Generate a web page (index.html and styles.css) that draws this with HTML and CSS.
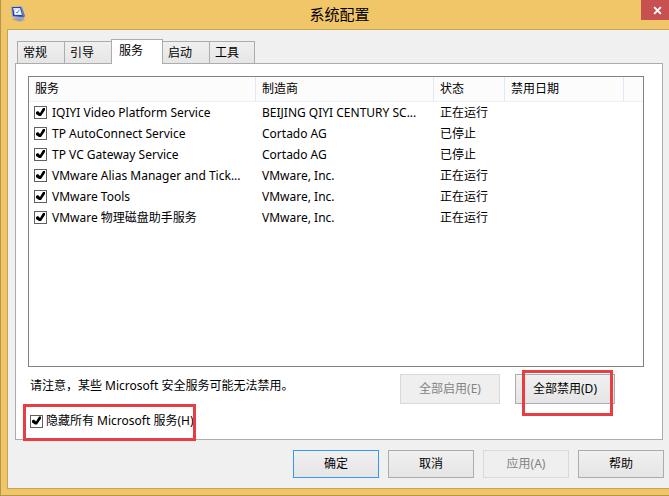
FILE: index.html
```html
<!DOCTYPE html>
<html lang="zh-CN">
<head>
<meta charset="utf-8">
<title>系统配置</title>
<link rel="stylesheet" href="styles.css">
</head>
<body>
<div class="window">
  <header class="titlebar">
    <svg class="app-icon" viewBox="0 0 16 16" aria-hidden="true">
      <path d="M2 13l5-2 6 0 2 3-5 2-7-2z" fill="#b9ac8c"/>
      <path d="M5 13l6-1 2 2-4 1z" fill="#8f9ac0"/>
      <path d="M1 1l11-1 3 11-3 2-10-2z" fill="#9aa6d2"/>
      <path d="M2 1l9 0 2 10-10-1z" fill="#2f41a0"/>
      <path d="M3 2l7 0 2 7-7 0z" fill="#cfe2fa"/>
      <path d="M4 8l3-5h2L6 9zM8 8l2-4 1 4z" fill="#fff"/>
      <path d="M6 6l1 1 2-3" fill="none" stroke="#5a82d2"/>
      <path d="M12 1l3 9-2 2z" fill="#6574b8"/>
    </svg>
    <h1>系统配置</h1>
    <button class="close" type="button" aria-label="关闭">
      <svg viewBox="0 0 8 8" aria-hidden="true"><path d="M1 1l6 6M7 1L1 7" stroke="#fff" stroke-width="1.7"/></svg>
    </button>
  </header>
  <main class="content">
    <div class="tabs" role="tablist">
      <button type="button" role="tab">常规</button>
      <button type="button" role="tab">引导</button>
      <button type="button" role="tab" class="active" aria-selected="true">服务</button>
      <button type="button" role="tab">启动</button>
      <button type="button" role="tab">工具</button>
    </div>
    <section class="panel">
      <div class="list">
        <table>
          <colgroup><col class="c-name"><col class="c-maker"><col class="c-state"><col class="c-date"><col></colgroup>
          <thead>
            <tr><th>服务</th><th>制造商</th><th>状态</th><th>禁用日期</th><th></th></tr>
          </thead>
          <tbody>
            <tr><td><label><input type="checkbox" checked>IQIYI Video Platform Service</label></td><td>BEIJING QIYI CENTURY SC...</td><td>正在运行</td><td></td><td></td></tr>
            <tr><td><label><input type="checkbox" checked>TP AutoConnect Service</label></td><td>Cortado AG</td><td>已停止</td><td></td><td></td></tr>
            <tr><td><label><input type="checkbox" checked>TP VC Gateway Service</label></td><td>Cortado AG</td><td>已停止</td><td></td><td></td></tr>
            <tr><td><label><input type="checkbox" checked>VMware Alias Manager and Tick...</label></td><td>VMware, Inc.</td><td>正在运行</td><td></td><td></td></tr>
            <tr><td><label><input type="checkbox" checked>VMware Tools</label></td><td>VMware, Inc.</td><td>正在运行</td><td></td><td></td></tr>
            <tr><td><label><input type="checkbox" checked>VMware 物理磁盘助手服务</label></td><td>VMware, Inc.</td><td>正在运行</td><td></td><td></td></tr>
          </tbody>
        </table>
      </div>
      <div class="actions">
        <p>请注意，某些 Microsoft 安全服务可能无法禁用。</p>
        <button class="btn wide" type="button" disabled>全部启用(E)</button>
        <div class="marked">
          <button class="btn wide" type="button">全部禁用(D)</button>
          <span class="mark mark-disable"></span>
        </div>
      </div>
      <div class="filter marked">
        <label><input type="checkbox" checked>隐藏所有 Microsoft 服务(H)</label>
        <span class="mark mark-hide"></span>
      </div>
    </section>
    <footer class="footer">
      <button class="btn default" type="button">确定</button>
      <button class="btn" type="button">取消</button>
      <button class="btn" type="button" disabled>应用(A)</button>
      <button class="btn" type="button">帮助</button>
    </footer>
  </main>
</div>
</body>
</html>
```
FILE: styles.css
```css
* { box-sizing: border-box; }

body {
  margin: 0;
  color: #000;
  font: 12px/20px "Noto Sans", "Noto Sans CJK SC", sans-serif;
}

button {
  margin: 0;
  color: inherit;
  font: inherit;
}

.window {
  display: flex;
  flex-direction: column;
  min-height: 100vh;
  padding: 0 0 6px 6px;
  border: solid #b5954c;
  border-width: 0 0 1px 1px;
  background: #f0c669;
}

/* Title bar */
.titlebar {
  display: flex;
  align-items: flex-start;
  height: 29px;
}

.app-icon {
  width: 16px;
  height: 16px;
  margin: 6px 0 0 3px;
}

.titlebar h1 {
  flex: 1;
  margin: 4px 0 0 12px;
  font-size: 15px;
  font-weight: 400;
  line-height: 20px;
  text-align: center;
}

.close {
  display: flex;
  align-items: center;
  justify-content: center;
  width: 28px;
  height: 20px;
  padding: 0 0 0 4px;
  border: 0;
  background: #c75050;
}

.close svg {
  width: 9px;
  height: 9px;
}

.content {
  display: flex;
  flex: 1;
  flex-direction: column;
  padding: 9px 6px 10px 7px;
  border: solid #c5a35a;
  border-width: 1px 0 1px 1px;
  background: #f0f0f0;
}

/* Tabs */
.tabs {
  display: flex;
  align-items: flex-end;
  padding-left: 2px;
}

.tabs button {
  width: 48px;
  height: 22px;
  margin-right: -1px;
  padding: 0 0 0 5px;
  border: 1px solid #acacac;
  border-bottom: 0;
  background: linear-gradient(#f0f0f0, #e5e5e5);
  text-align: left;
}

.tabs button:last-child { width: 46px; }

.tabs .active {
  position: relative;
  width: 52px;
  height: 25px;
  margin-bottom: -1px;
  padding: 0 0 2px 7px;
  background: #fff;
}

.panel {
  display: flex;
  flex: 1;
  flex-direction: column;
  padding: 12px 18px 8px 12px;
  border: 1px solid #acacac;
  background: #fff;
}

/* Service list */
.list {
  flex: 1;
  border: 1px solid #828282;
}

table {
  width: 100%;
  table-layout: fixed;
  border-collapse: separate;
  border-spacing: 0;
}

.c-name { width: 227px; }
.c-maker { width: 178px; }
.c-state { width: 71px; }
.c-date { width: 119px; }

th,
td {
  padding: 0 0 0 6px;
  font-weight: 400;
  text-align: left;
  white-space: nowrap;
}

th {
  height: 25px;
  border-right: 1px solid #dfeaf5;
  border-bottom: 1px solid #edf1f6;
  background: #fcfcfc;
}

th:last-child { border-right: 0; }

td { height: 21px; }

td:first-child { padding-left: 5px; }

label {
  display: flex;
  align-items: center;
  gap: 5px;
  white-space: nowrap;
}

input[type="checkbox"] {
  flex: none;
  width: 13px;
  height: 13px;
  margin: 0;
  border: 1px solid #606060;
  background: #fff;
  appearance: none;
}

input[type="checkbox"]:checked::before {
  content: "";
  display: block;
  width: 11px;
  height: 11px;
  background: #000;
  clip-path: polygon(1px 5px, 3px 4px, 5px 6px, 8px 1px, 10px 1px, 10px 3px, 6px 9px, 4px 9px, 1px 7px);
}

/* Buttons */
.btn {
  width: 86px;
  height: 28px;
  padding: 0;
  border: 1px solid #acacac;
  background: linear-gradient(#f0f0f0, #e5e5e5);
}

.btn.wide {
  display: block;
  width: 100px;
  height: 30px;
}

.btn.default { border-color: #3399ff; }

.btn:disabled {
  border-color: #d9d9d9;
  background: #efefef;
  color: #838383;
}

.actions {
  display: flex;
  gap: 15px;
  margin: 7px 29px 0 2px;
}

.actions p {
  flex: 1;
  margin: 2px 0 0;
  white-space: nowrap;
}

.filter {
  align-self: flex-start;
  margin: 7px 0 0 2px;
}

.filter label { gap: 3px; }

/* Highlight frames drawn over the controls */
.marked { position: relative; }

.mark {
  position: absolute;
  border: 3px solid #e63e43;
  pointer-events: none;
}

.mark-disable { inset: -4px 2px -12px 7px; }

.mark-hide { inset: -7px -2px -10px -7px; }

.footer {
  display: flex;
  justify-content: flex-end;
  gap: 9px;
  margin-right: -1px;
  padding-top: 10px;
}
```
